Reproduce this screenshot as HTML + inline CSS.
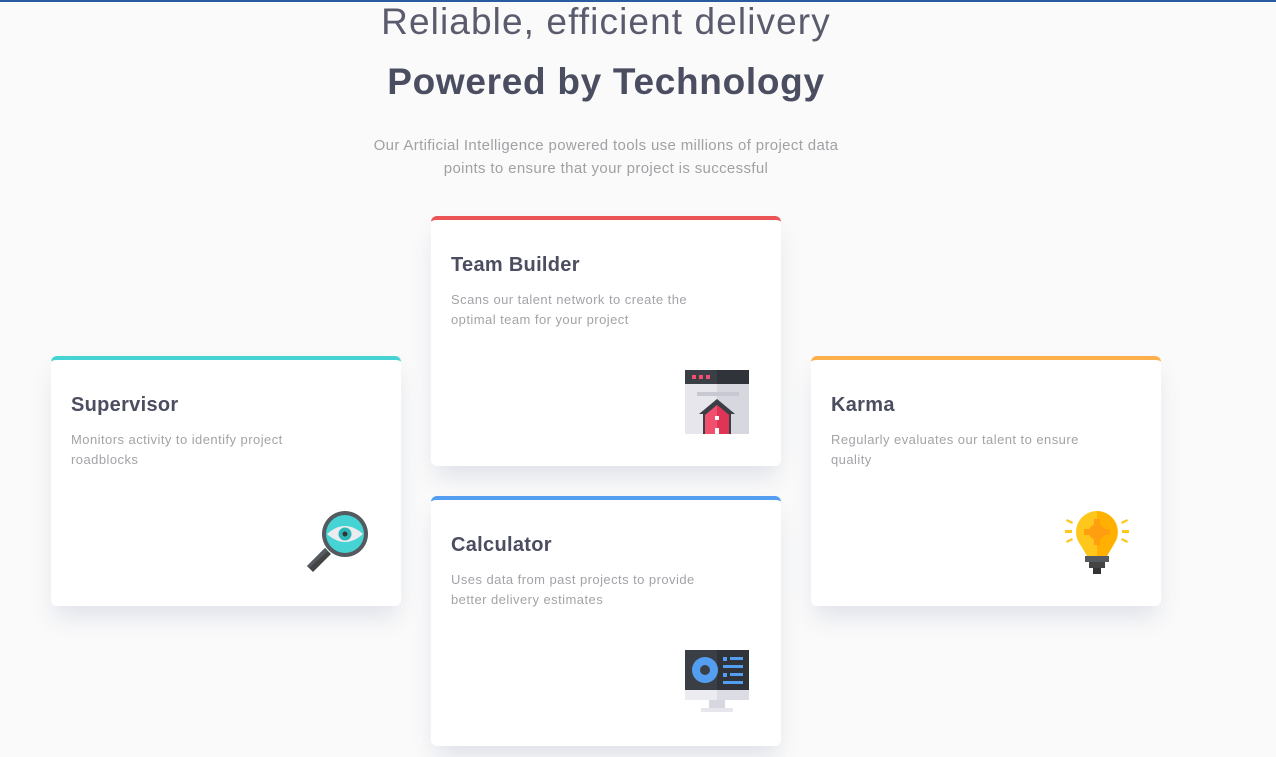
<!DOCTYPE html>
<html><head><meta charset="utf-8"><style>
*{margin:0;padding:0;box-sizing:border-box}
html,body{width:1276px;height:757px;overflow:hidden}
body{background:#fafafa;font-family:"Liberation Sans",sans-serif;position:relative}
.bar{position:absolute;top:0;left:0;width:1276px;height:2px;background:#2a5ba0}
.h1{position:absolute;top:0;left:0;width:1212px;text-align:center;font-size:37px;font-weight:normal;color:#5a5c6e;letter-spacing:1.1px;line-height:44px}
.h2{position:absolute;top:60px;left:0;width:1212px;text-align:center;font-size:37px;font-weight:bold;color:#4b4d60;letter-spacing:0.7px;line-height:44px}
.p{position:absolute;top:134px;left:356px;width:500px;text-align:center;font-size:15px;line-height:23px;color:#a1a1a5;letter-spacing:0.35px}
.card{position:absolute;width:350px;height:250px;background:#fff;border-radius:6px;border-top:4px solid;box-shadow:0 14px 24px -4px rgba(70,90,140,.15);padding:26px 20px}
.card h3{font-size:20px;font-weight:bold;color:#4b4d60;margin-top:6px;line-height:26px;letter-spacing:0.3px}
.card p{font-size:13px;color:#a3a3a8;line-height:20px;margin-top:12px;width:265px;letter-spacing:0.45px}
.card svg{position:absolute;right:32px;bottom:32px;width:64px;height:64px}
</style></head><body>
<div class="bar"></div>
<div class="h1">Reliable, efficient delivery</div>
<div class="h2">Powered by Technology</div>
<div class="p">Our Artificial Intelligence powered tools use millions of project data points to ensure that your project is successful</div>

<div class="card" style="left:51px;top:356px;border-color:#45d3d3">
<h3>Supervisor</h3><p style="width:240px">Monitors activity to identify project roadblocks</p>
<svg viewBox="0 0 64 64"><path d="M20 38 L2 56 L8 62 L26 44Z" fill="#444"/><path d="M20 38 L2 56 L4 58 L23 41Z" fill="#555a60"/><circle cx="40" cy="24" r="23" fill="#555a60"/><circle cx="40" cy="24" r="19" fill="#45d3d3"/><path d="M22 24 Q40 8 58 24 Q40 40 22 24Z" fill="#ececf0"/><circle cx="40" cy="24" r="6.5" fill="#2bb5b5"/><circle cx="40" cy="24" r="2.5" fill="#333"/></svg>
</div>

<div class="card" style="left:431px;top:216px;border-color:#ea5454">
<h3>Team Builder</h3><p>Scans our talent network to create the optimal team for your project</p>
<svg viewBox="0 0 64 64"><rect x="0" y="14" width="64" height="50" fill="#e6e6ec"/><rect x="32" y="14" width="32" height="50" fill="#d7d7df"/><rect x="0" y="0" width="64" height="14" fill="#3a3f46"/><rect x="32" y="0" width="32" height="14" fill="#30343a"/><rect x="7" y="5" width="4" height="4" fill="#f0506e"/><rect x="14" y="5" width="4" height="4" fill="#f0506e"/><rect x="21" y="5" width="4" height="4" fill="#f0506e"/><rect x="12" y="22" width="42" height="4" fill="#c8c8d2"/><path d="M14 44 L32 29 L50 44 L46 44 L46 64 L18 64 L18 44Z" fill="#3a3f46"/><path d="M20 45 L32 35 L44 45 L44 64 L20 64Z" fill="#f0506e"/><path d="M32 35 L44 45 L44 64 L32 64Z" fill="#e03456"/><rect x="30" y="46" width="4" height="4" fill="#fff"/><rect x="30" y="58" width="4" height="6" fill="#fff"/></svg>
</div>

<div class="card" style="left:431px;top:496px;border-color:#549ef2">
<h3>Calculator</h3><p>Uses data from past projects to provide better delivery estimates</p>
<svg viewBox="0 0 64 64"><rect x="0" y="0" width="64" height="40" fill="#3a3f46"/><rect x="32" y="0" width="32" height="40" fill="#30343a"/><rect x="0" y="40" width="64" height="10" fill="#ececf0"/><rect x="32" y="40" width="32" height="10" fill="#dcdce4"/><rect x="24" y="50" width="16" height="8" fill="#d7d7df"/><rect x="16" y="58" width="32" height="4" fill="#e6e6ec"/><circle cx="20" cy="20" r="13" fill="#549ef2"/><circle cx="20" cy="20" r="5" fill="#3a3f46"/><rect x="38" y="7" width="4" height="4" fill="#549ef2"/><rect x="45" y="7" width="13" height="3" fill="#549ef2"/><rect x="38" y="15" width="20" height="3" fill="#549ef2"/><rect x="38" y="23" width="4" height="4" fill="#549ef2"/><rect x="45" y="23" width="13" height="3" fill="#549ef2"/><rect x="38" y="31" width="20" height="3" fill="#549ef2"/></svg>
</div>

<div class="card" style="left:811px;top:356px;border-color:#fcaf4a">
<h3>Karma</h3><p>Regularly evaluates our talent to ensure quality</p>
<svg viewBox="0 0 64 64"><circle cx="32" cy="22" r="21" fill="#ffc61b"/><path d="M32 1 A21 21 0 0 1 45 38 L42 46 L32 46Z" fill="#ffb000"/><path d="M15 34 L22 46 L42 46 L49 34Z" fill="#ffc61b"/><path d="M32 34 L49 34 L42 46 L32 46Z" fill="#ffb000"/><circle cx="32" cy="22" r="8" fill="#ff9f10"/><rect x="29" y="9" width="6" height="26" fill="#ff9f10"/><rect x="19" y="19" width="26" height="6" fill="#ff9f10"/><rect x="20" y="46" width="24" height="6" fill="#555a60"/><rect x="24" y="52" width="16" height="6" fill="#444"/><rect x="28" y="58" width="8" height="6" fill="#333"/><rect x="0" y="20" width="7" height="3" fill="#ffc61b"/><rect x="57" y="20" width="7" height="3" fill="#ffc61b"/><path d="M2 9 L8 12 L7 14 L1 11Z M62 9 L56 12 L57 14 L63 11Z M2 33 L8 30 L7 28 L1 31Z M62 33 L56 30 L57 28 L63 31Z" fill="#ffc61b"/></svg>
</div>
</body></html>
